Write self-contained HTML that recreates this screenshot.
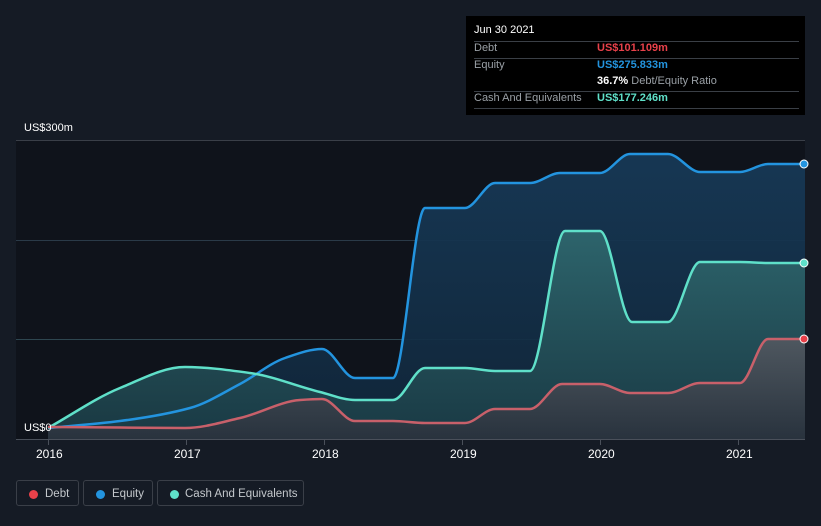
<!DOCTYPE html>
<html><head><meta charset="utf-8"><style>
html,body{margin:0;width:821px;height:526px;overflow:hidden}
body{background:#151b25;font-family:"Liberation Sans",sans-serif;position:relative}
.t{position:absolute;color:#fff;font-size:12px}
.tip{position:absolute;left:466px;top:16px;width:339px;height:99px;background:#000;font-size:11px;color:#9aa0a6}
.tip .r{position:absolute;left:8px;right:6px;border-top:1px solid #3a3f46}
.leg{position:absolute;top:480px;height:26px;border:1px solid #3a3f48;border-radius:3px;color:#c4c8cc;font-size:11.5px;line-height:26px;box-sizing:border-box;white-space:nowrap}
.leg i{position:absolute;left:12px;top:9px;width:9px;height:9px;border-radius:50%}
</style></head><body>
<svg width="821" height="526" style="position:absolute;left:0;top:0">
<defs>
<linearGradient id="ge" x1="0" y1="0" x2="0" y2="1"><stop offset="0" stop-color="#173a58"/><stop offset="1" stop-color="#10263a"/></linearGradient>
<linearGradient id="gc" x1="0" y1="0" x2="0" y2="1"><stop offset="0" stop-color="#2f686e"/><stop offset="1" stop-color="#1a3b45"/></linearGradient>
<linearGradient id="gd" x1="0" y1="0" x2="0" y2="1"><stop offset="0" stop-color="#525860"/><stop offset="1" stop-color="#2a323d"/></linearGradient>
</defs>
<rect x="16" y="140" width="789" height="300" fill="#0f131b"/>
<line x1="16" y1="240.5" x2="805" y2="240.5" stroke="#2a3a48"/>
<line x1="16" y1="339.5" x2="805" y2="339.5" stroke="#2e4650"/>
<path id="fe" fill="url(#ge)" fill-opacity="0.92"/><path id="fc" fill="url(#gc)" fill-opacity="0.92"/><path id="fd" fill="url(#gd)" fill-opacity="0.92"/>
<line x1="16" y1="140.5" x2="805" y2="140.5" stroke="#3a3f48"/>
<path id="le" fill="none" stroke="#2394df" stroke-width="2.5"/>
<path id="lc" fill="none" stroke="#5fe0c9" stroke-width="2.5"/>
<path id="ld" fill="none" stroke="#c8606a" stroke-width="2.5"/>
<line x1="16" y1="439.5" x2="805" y2="439.5" stroke="#4a505a"/>
<g stroke="#4a505a"><line x1="48.5" y1="440" x2="48.5" y2="445"/><line x1="186.5" y1="440" x2="186.5" y2="445"/><line x1="324.5" y1="440" x2="324.5" y2="445"/><line x1="462.5" y1="440" x2="462.5" y2="445"/><line x1="600.5" y1="440" x2="600.5" y2="445"/><line x1="738.5" y1="440" x2="738.5" y2="445"/></g>
<circle cx="804" cy="164" r="4" fill="#2394df" stroke="#fff" stroke-width="1"/>
<circle cx="804" cy="263" r="4" fill="#5fe0c9" stroke="#fff" stroke-width="1"/>
<circle cx="804" cy="339" r="4" fill="#e8414a" stroke="#fff" stroke-width="1"/>
</svg>
<script>
function p(a){const n=a.length,dx=[],m=[],t=[];
for(let i=0;i<n-1;i++){dx[i]=a[i+1][0]-a[i][0];m[i]=(a[i+1][1]-a[i][1])/dx[i];}
t[0]=m[0];t[n-1]=m[n-2];
for(let i=1;i<n-1;i++){if(m[i-1]*m[i]<=0)t[i]=0;else{const w1=2*dx[i]+dx[i-1],w2=dx[i]+2*dx[i-1];t[i]=(w1+w2)/(w1/m[i-1]+w2/m[i]);}}
let s="M"+a[0][0]+","+a[0][1];
for(let i=0;i<n-1;i++){const h=dx[i]/3;s+=" C"+(a[i][0]+h)+","+(a[i][1]+t[i]*h)+" "+(a[i+1][0]-h)+","+(a[i+1][1]-t[i+1]*h)+" "+a[i+1][0]+","+a[i+1][1];}
return s}
const E=[[48,428],[120,421],[190,408],[240,384],[285,358],[322,349],[355,378],[393,378],[425,208],[465,208],[495,183],[530,183],[560,173],[600,173],[630,154],[668,154],[700,172],[740,172],[768,164],[805,164]];
const C=[[48,428],[120,388],[185,367],[250,373],[320,392],[355,400],[393,400],[425,368],[465,368],[495,371],[530,371],[565,231],[600,231],[632,322],[668,322],[700,262],[740,262],[768,263],[805,263]];
const D=[[48,427],[120,427.5],[185,428],[240,418],[300,400],[322,399],[355,421],[393,421],[425,423],[465,423],[495,409],[530,409],[562,384],[600,384],[630,393],[668,393],[700,383],[740,383],[768,339],[805,339]];
[["e",E],["c",C],["d",D]].forEach(([k,a])=>{let s=p(a);document.getElementById("l"+k).setAttribute("d",s);document.getElementById("f"+k).setAttribute("d",s+" L805,439 L48,439 Z");});
</script>
<div class="t" style="left:24px;top:122px;font-size:11px">US$300m</div>
<div class="t" style="left:24px;top:422px;font-size:11px">US$0</div>
<div class="t" style="left:36px;top:447px">2016</div>
<div class="t" style="left:174px;top:447px">2017</div>
<div class="t" style="left:312px;top:447px">2018</div>
<div class="t" style="left:450px;top:447px">2019</div>
<div class="t" style="left:588px;top:447px">2020</div>
<div class="t" style="left:726px;top:447px">2021</div>
<div class="tip">
<div style="position:absolute;left:8px;top:8px;color:#fff;font-size:11px">Jun 30 2021</div>
<div class="r" style="top:25px"></div>
<div style="position:absolute;left:8px;top:26px">Debt</div><div style="position:absolute;left:131px;top:26px;color:#e8414a;font-weight:bold">US$101.109m</div>
<div class="r" style="top:42px"></div>
<div style="position:absolute;left:8px;top:43px">Equity</div><div style="position:absolute;left:131px;top:43px;color:#2394df;font-weight:bold">US$275.833m</div>
<div style="position:absolute;left:131px;top:59px"><b style="color:#fff">36.7%</b> Debt/Equity Ratio</div>
<div class="r" style="top:75px"></div>
<div style="position:absolute;left:8px;top:76px">Cash And Equivalents</div><div style="position:absolute;left:131px;top:76px;color:#5fe0c9;font-weight:bold">US$177.246m</div>
<div class="r" style="top:92px"></div>
</div>
<div class="leg" style="left:16px;width:63px"><i style="background:#e8414a"></i><span style="margin-left:28px">Debt</span></div>
<div class="leg" style="left:83px;width:70px"><i style="background:#2394df"></i><span style="margin-left:28px">Equity</span></div>
<div class="leg" style="left:157px;width:147px"><i style="background:#5fe0c9"></i><span style="margin-left:27px">Cash And Equivalents</span></div>
</body></html>
